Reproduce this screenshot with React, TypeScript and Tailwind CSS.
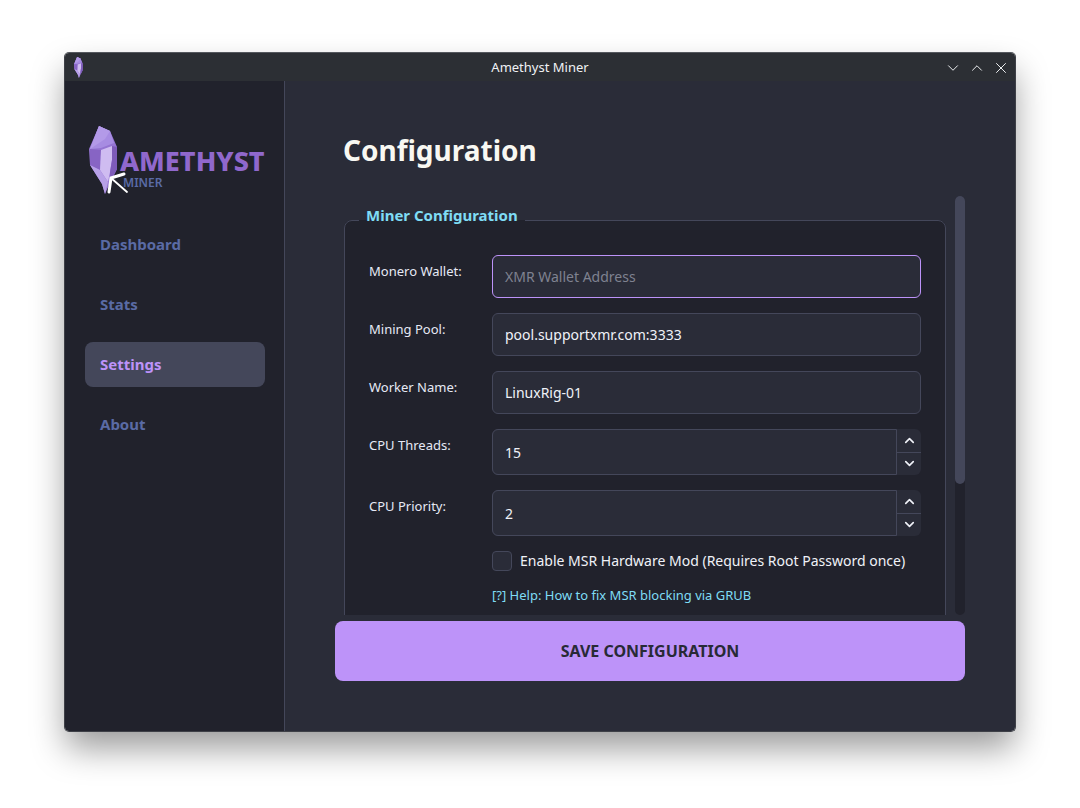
import { ChevronDown, ChevronUp, X } from "lucide-react"

const navItems = ["Dashboard", "Stats", "Settings", "About"]

function Crystal({ className }: { className?: string }) {
  return (
    <svg viewBox="0 0 29 68" preserveAspectRatio="none" className={className}>
      <path d="M10 0 L21 5 L28 21 L28 43 L21 57 L16 68 L13 58 L1 39 L0 23 Z" fill="#9474d2" />
      <path d="M10 0 L21 5 L25 17 L12 22 L1 23 Z" fill="#a78ce2" />
      <path d="M10 0 L21 5 L16 13 L1 23 Z" fill="#b39ae8" />
      <path d="M1 23 L12 24 L11 44 L1 39 Z" fill="#8764c4" />
      <path d="M12 24 L23 20 L23 34 L21 46 L19 56 L11 44 Z" fill="#cfbcf1" />
      <path d="M1 39 L11 44 L19 56 L16 68 L13 58 Z" fill="#b8a1e8" />
      <path d="M23 20 L28 21 L28 43 L21 57 L21 46 L23 34 Z" fill="#7e5bb9" />
    </svg>
  )
}

function Logo() {
  return (
    <div className="relative h-[68px] w-[180px] shrink-0">
      <Crystal className="absolute left-[4px] top-0 h-[68px] w-[29px]" />
      <span className="absolute left-[35px] top-[20px] text-[27px] font-extrabold leading-[30px] text-[#9068cc]">
        AMETHYST
      </span>
      <span className="absolute left-[38px] top-[50px] text-[12px] font-semibold leading-[14px] text-[#5a6ba5]">
        MINER
      </span>
      <svg viewBox="0 0 24 24" className="absolute left-[21px] top-[45px] h-[24px] w-[24px]" fill="none" stroke="#fff" strokeLinecap="round">
        <path d="M3 21 L5 7 L18 3" strokeWidth="3" />
        <path d="M5 7 L21 21" strokeWidth="1.8" />
      </svg>
    </div>
  )
}

function TextRow({ label, value, placeholder, focused }: { label: string; value?: string; placeholder?: string; focused?: boolean }) {
  return (
    <div className="flex">
      <label className="w-[123px] shrink-0 pt-[6px] text-[13px] leading-[20px] text-[#e6e9f5]">{label}</label>
      <div
        className={`flex h-[43px] w-[429px] items-center rounded-[6px] border bg-[#2a2c38] px-[12px] text-[14px] ${
          focused ? "border-[#bd93f9]" : "border-[#44475a]"
        } ${value ? "text-[#f0f2f8]" : "text-[#7f8290]"}`}
      >
        {value ?? placeholder}
      </div>
    </div>
  )
}

function SpinRow({ label, value }: { label: string; value: string }) {
  return (
    <div className="flex">
      <label className="w-[123px] shrink-0 pt-[6px] text-[13px] leading-[20px] text-[#e6e9f5]">{label}</label>
      <div className="flex h-[46px] w-[429px] rounded-[6px] bg-[#2a2c38]">
        <div className="flex flex-1 items-center rounded-l-[6px] border border-[#44475a] px-[12px] text-[14px] text-[#f0f2f8]">
          {value}
        </div>
        <div className="flex w-[24px] flex-col text-[#f0f2f8]">
          <div className="flex flex-1 items-center justify-center border-b border-[#44475a]">
            <ChevronUp size={15} strokeWidth={2.6} />
          </div>
          <div className="flex flex-1 items-center justify-center">
            <ChevronDown size={15} strokeWidth={2.6} />
          </div>
        </div>
      </div>
    </div>
  )
}

export default function App() {
  return (
    <div className="min-h-[808px] bg-white pl-[64px] pt-[52px] font-['Noto_Sans',sans-serif]">
      <div className="flex h-[680px] w-[952px] flex-col overflow-hidden rounded-[5px] border border-[#3e4047] border-t-[#55585e] shadow-[0_18px_34px_-2px_rgba(0,0,0,0.4)]">
        <div className="flex h-[28px] shrink-0 items-center bg-[#2c2f34] pb-[0px] pl-[9px] pr-[5px] pt-[1px] text-[13px] text-[#f0f2f4]">
          <div className="w-[76px]">
            <Crystal className="h-[21px] w-[9px]" />
          </div>
          <div className="flex-1 text-center">Amethyst Miner</div>
          <div className="flex w-[80px] items-center justify-end gap-[6px]">
            <ChevronDown size={18} strokeWidth={1.3} />
            <ChevronUp size={18} strokeWidth={1.3} />
            <X size={18} strokeWidth={1.3} />
          </div>
        </div>

        <div className="flex min-h-0 flex-1">
          <aside className="flex w-[220px] shrink-0 flex-col border-r border-[#44475a] bg-[#21222c] pl-[20px] pr-[19px] pt-[45px]">
            <Logo />
            <nav className="mt-[28px] flex flex-col gap-[15px]">
              {navItems.map((item) => (
                <div
                  key={item}
                  className={`flex h-[45px] items-center rounded-[8px] px-[15px] text-[15px] font-bold ${
                    item === "Settings" ? "bg-[#44475a] text-[#bd93f9]" : "text-[#5a6ba5]"
                  }`}
                >
                  {item}
                </div>
              ))}
            </nav>
          </aside>

          <main className="flex min-w-0 flex-1 flex-col bg-[#2a2c38] pl-[50px] pr-[50px] pt-[47px]">
            <h1 className="ml-[8px] text-[28px] font-bold leading-[44px] text-[#f8f8f2]">Configuration</h1>

            <div className="mt-[24px] flex h-[419px] gap-[9px]">
              <div className="h-full w-[611px] shrink-0 overflow-hidden pl-[9px] pt-[9px]">
                <fieldset className="h-[500px] rounded-[8px] border border-[#44475a] bg-[#21222c]">
                  <legend className="ml-[14px] px-[7px] pb-[10px] text-[15px] font-bold leading-[20px] text-[#7fdcf5]">
                    Miner Configuration
                  </legend>
                  <div className="flex flex-col gap-[15px] pl-[24px] pt-[20px]">
                    <TextRow label="Monero Wallet:" placeholder="XMR Wallet Address" focused />
                    <TextRow label="Mining Pool:" value="pool.supportxmr.com:3333" />
                    <TextRow label="Worker Name:" value="LinuxRig-01" />
                    <SpinRow label="CPU Threads:" value="15" />
                    <SpinRow label="CPU Priority:" value="2" />
                  </div>
                  <div className="ml-[147px] mt-[15px] flex items-center gap-[8px]">
                    <div className="h-[20px] w-[20px] rounded-[4px] border border-[#44475a] bg-[#2a2c38]" />
                    <span className="text-[14px] leading-[20px] text-[#f0f2f8]">
                      Enable MSR Hardware Mod (Requires Root Password once)
                    </span>
                  </div>
                  <div className="ml-[147px] mt-[14px] text-[13px] leading-[20px] text-[#7fdcf5]">
                    [?] Help: How to fix MSR blocking via GRUB
                  </div>
                </fieldset>
              </div>
              <div className="h-full w-[10px] shrink-0 rounded-[5px] bg-[#21222c]">
                <div className="h-[288px] rounded-[5px] bg-[#44475a]" />
              </div>
            </div>

            <button className="mt-[6px] h-[60px] w-[630px] rounded-[8px] bg-[#bd93f9] text-[16px] font-bold text-[#282a36]">
              SAVE CONFIGURATION
            </button>
          </main>
        </div>
      </div>
    </div>
  )
}
